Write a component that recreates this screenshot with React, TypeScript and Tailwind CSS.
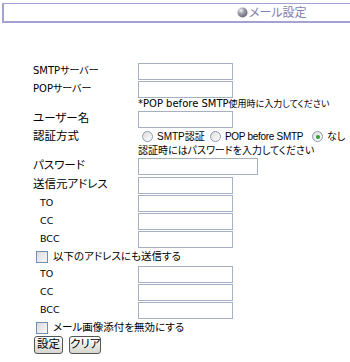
import React from "react";

const font = "font-['DejaVu_Sans','Noto_Sans_CJK_JP',sans-serif] [font-feature-settings:'palt']";

function TextBox({ wide }: { wide?: boolean }) {
  return (
    <div
      className={`h-[17px] border border-[#a5b1c2] bg-white ${wide ? "w-[120px]" : "w-[95px]"}`}
    />
  );
}

function Radio({ checked }: { checked?: boolean }) {
  return (
    <span className="flex h-[11px] w-[11px] shrink-0 items-center justify-center rounded-full border border-[#8a9bb0] bg-gradient-to-br from-[#dcdcdc] to-white">
      {checked && <span className="h-[4px] w-[4px] rounded-full bg-[#2ca02c]" />}
    </span>
  );
}

function Check() {
  return <span className="h-[12px] w-[12px] shrink-0 border border-[#6f8fb0] bg-gradient-to-br from-[#dcdcdc] to-[#f8f8f8]" />;
}

function Row({ label, indent, children, h = "h-[18px]", small }: { label?: string; indent?: boolean; children?: React.ReactNode; h?: string; small?: boolean }) {
  return (
    <div className={`flex items-center leading-none ${h}`}>
      <div className={`w-[105px] shrink-0 whitespace-nowrap ${indent ? "pl-[7px] text-[9.5px]" : small ? "text-[10px]" : "text-[11.5px]"}`}>{label}</div>
      {children}
    </div>
  );
}

const btn = "h-[18px] whitespace-nowrap rounded-[3px] border border-[#555] bg-gradient-to-b from-white to-[#d6d6ce] text-[11.5px] leading-none";

export default function App() {
  return (
    <div className={`h-[362px] w-[350px] bg-white text-black ${font}`}>
      <div className="pl-[2px] pt-[3px]">
        <div className="flex h-[20px] items-center border-y-2 border-l-2 border-[#a3a3d1] border-t pl-[233px]">
          <svg width="11" height="11" viewBox="0 0 11 11" className="mr-[1px]">
            <defs>
              <radialGradient id="g" cx="0.35" cy="0.3" r="0.7">
                <stop offset="0" stopColor="#f4f4f8" />
                <stop offset="0.5" stopColor="#9a9aa8" />
                <stop offset="1" stopColor="#6c6c7c" />
              </radialGradient>
            </defs>
            <circle cx="5.5" cy="5.5" r="5" fill="url(#g)" />
          </svg>
          <span className="whitespace-nowrap text-[12px] text-[#8080b0]">メール設定</span>
        </div>
      </div>

      <div className="pl-[33px] pt-[39px]">
        <Row label="SMTPサーバー" small>
          <TextBox />
        </Row>
        <Row label="POPサーバー" small>
          <TextBox />
        </Row>
        <div className="flex h-[12px] items-center whitespace-nowrap pl-[105px] leading-none">
          <span className="text-[10px]">*POP before SMTP</span>
          <span className="text-[9px]">使用時に入力してください</span>
        </div>
        <Row label="ユーザー名">
          <TextBox />
        </Row>
        <Row label="認証方式" h="h-[17px]">
          <div className="flex items-center whitespace-nowrap font-['Liberation_Sans','Noto_Sans_CJK_JP',sans-serif] text-[10px]">
            <span className="ml-[4px]"><Radio /></span>
            <span className="ml-[4px] w-[53px]">SMTP認証</span>
            <Radio />
            <span className="ml-[4px] w-[87px] tracking-[-0.3px]">POP before SMTP</span>
            <Radio checked />
            <span className="ml-[4px]">なし</span>
          </div>
        </Row>
        <div className="flex h-[11px] items-center whitespace-nowrap pl-[105px] text-[10px] leading-none">認証時にはパスワードを入力してください</div>
        <Row label="パスワード" h="h-[20px]">
          <TextBox wide />
        </Row>
        <Row label="送信元アドレス">
          <TextBox />
        </Row>
        <Row label="TO" indent>
          <TextBox />
        </Row>
        <Row label="CC" indent>
          <TextBox />
        </Row>
        <Row label="BCC" indent>
          <TextBox />
        </Row>
        <div className="flex h-[17px] items-center gap-[5px] whitespace-nowrap pl-[3px] text-[10.5px] leading-none">
          <Check />
          <span>以下のアドレスにも送信する</span>
        </div>
        <Row label="TO" indent>
          <TextBox />
        </Row>
        <Row label="CC" indent>
          <TextBox />
        </Row>
        <Row label="BCC" indent>
          <TextBox />
        </Row>
        <div className="flex h-[17px] items-center gap-[5px] whitespace-nowrap pl-[3px] text-[10.5px] leading-none">
          <Check />
          <span>メール画像添付を無効にする</span>
        </div>
        <div className="flex gap-[6px] pl-[1px]">
          <button className={`${btn} w-[29px]`}>設定</button>
          <button className={`${btn} w-[32px]`}>クリア</button>
        </div>
      </div>
    </div>
  );
}
